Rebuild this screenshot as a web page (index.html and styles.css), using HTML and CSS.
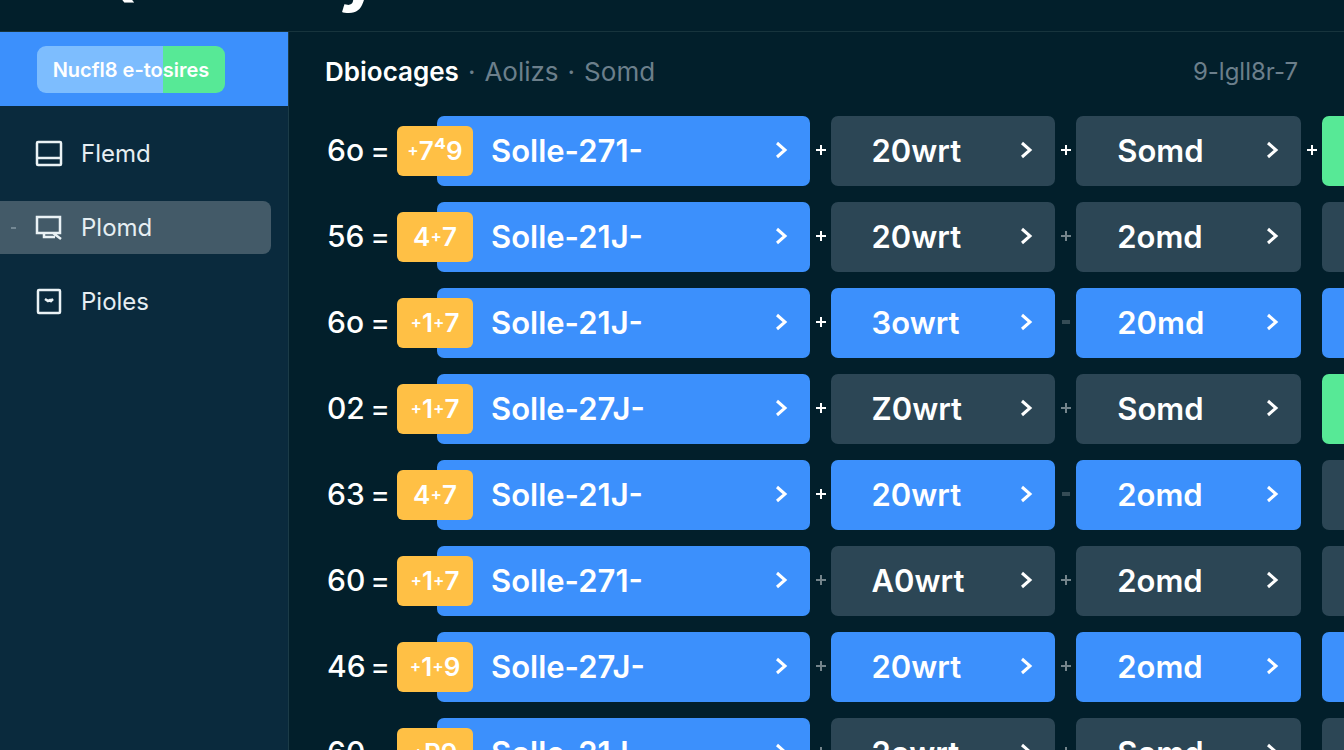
FILE: index.html
```html
<!DOCTYPE html>
<html lang="en">
<head>
    <meta charset="UTF-8">
    <meta name="viewport" content="width=device-width, initial-scale=1.0">
    <title>Dbiocages</title>
    <link rel="stylesheet" href="styles.css">
</head>
<body>
    <header class="top-bar">
        <h1 class="top-title">Quantity</h1>
    </header>
    <div class="layout">
        <aside class="sidebar">
            <div class="side-head">
                <button class="pill-btn">Nucfl8 e-tosires</button>
            </div>
            <nav class="side-nav">
                <a class="nav-item" href="#flemd">
                    <svg class="nav-icon" viewBox="0 0 28 28"><rect x="2" y="2" width="24" height="23" rx="1"/><path d="M2 18h24"/></svg>
                    Flemd
                </a>
                <a class="nav-item active" href="#plomd">
                    <svg class="nav-icon" viewBox="0 0 28 28"><path d="M9 19H2V3h23v16H9v4h11M18 19l8 6"/></svg>
                    Plomd
                </a>
                <a class="nav-item" href="#pioles">
                    <svg class="nav-icon" viewBox="0 0 28 28"><rect x="3" y="2" width="22" height="23" rx="1"/><path d="M10 11l3 2 2-1 1 1 2-2"/></svg>
                    Pioles
                </a>
            </nav>
        </aside>
        <main class="content">
            <div class="crumbs">
                <h2>Dbiocages</h2>
                <span>·</span>
                <a href="#aolizs">Aolizs</a>
                <span>·</span>
                <a href="#somd">Somd</a>
                <span class="crumbs-id">9-lgll8r-7</span>
            </div>
            <div class="rows" id="rows"></div>
        </main>
    </div>
    <script src="rows.js"></script>
</body>
</html>
```
FILE: styles.css
```css
:root {
    --bg: #021f2b;
    --side: #0a2a3d;
    --blue: #3c90fc;
    --slate: #2c4655;
    --green: #57e996;
    --amber: #ffc045;
}

* { box-sizing: border-box; }
body { margin: 0; height: 100vh; display: flex; flex-direction: column; overflow: hidden; background: var(--bg); color: #fff; font-family: Inter, sans-serif; }
button { font-family: inherit; color: inherit; border: none; cursor: pointer; }
a { color: inherit; text-decoration: none; }

.top-bar { height: 32px; flex: none; display: flex; align-items: flex-end; overflow: hidden; padding: 0 84px; border-bottom: 1px solid #17343d; }
.top-title { margin: 0; font-size: 70px; line-height: 80px; font-weight: 700; padding-bottom: 18px; }

.layout { flex: 1; min-height: 0; display: flex; }
.sidebar { width: 289px; flex: none; background: var(--side); border-right: 1px solid #1b3b47; }
.side-head { background: var(--blue); height: 74px; padding: 14px 37px; }
.pill-btn { height: 47px; width: 188px; padding: 0; border-radius: 9px; background: linear-gradient(90deg, #7dbdfe 67%, var(--green) 67%); font-size: 20px; font-weight: 600; }
.side-nav { display: flex; flex-direction: column; gap: 21px; padding: 21px 17px 0 0; }
.nav-item { display: flex; align-items: center; gap: 18px; height: 53px; padding-left: 35px; font-size: 24px; color: #e6eef2; position: relative; border-radius: 0 8px 8px 0; }
.nav-item.active { background: #435a68; }
.nav-item.active::before { content: ""; position: absolute; left: 11px; width: 5px; height: 2px; background: #748894; }
.nav-icon { width: 28px; height: 28px; fill: none; stroke: #eaf2f5; stroke-width: 2.5; }

.content { flex: 1; min-width: 0; padding-left: 36px; overflow: hidden; }
.crumbs { display: flex; align-items: center; gap: 9px; height: 84px; padding: 0 46px 5px 0; font-size: 26px; color: #6c7f8b; }
.crumbs h2 { margin: 0; font-size: 26px; font-weight: 600; color: #fff; }
.crumbs-id { margin-left: auto; font-size: 24px; }

.rows { display: flex; flex-direction: column; gap: 16px; }
.row { display: grid; grid-template-columns: 91px minmax(0, 373fr) minmax(0, 225fr) minmax(0, 225fr) 22px; gap: 21px; height: 70px; }
.row-label { display: flex; align-items: center; padding: 0 26px 2px 2px; justify-content: space-between; font-size: 30px; font-weight: 500; white-space: nowrap; }
.row-label .eq { font-weight: 400; }
.cell { position: relative; display: flex; align-items: center; justify-content: space-between; padding: 0 22px 2px 41px; border-radius: 7px; background: var(--slate); font-size: 31px; font-weight: 600; text-align: left; }
.cell.blue { background: var(--blue); }
.cell.green { background: var(--green); }
.cell.main { padding-left: 54px; }
.cell.peek { width: 225px; }
.chevron { width: 14px; height: 20px; fill: none; stroke: #fff; stroke-width: 3; }
.badge { position: absolute; left: -40px; top: 10px; width: 76px; height: 50px; border-radius: 6px; background: var(--amber); font-size: 26px; line-height: 50px; text-align: center; }
.badge small { font-size: 17px; vertical-align: 4px; line-height: 1; }
.plus { position: absolute; left: -16px; width: 12px; height: 12px; fill: none; stroke: #fff; stroke-width: 2; }
.plus.dim { opacity: .45; }
.plus.faint { opacity: .2; }
```
FILE: rows.js
```js
// label, badge, name, second cell + colour, third cell + colour, last cell colour, plus strengths
const rows = [
    ['6o', '+7⁴9', 'Solle-271-', '20wrt', '', 'Somd', '', 'green', ['', '', '']],
    ['56', '4+7', 'Solle-21J-', '20wrt', '', '2omd', '', '', ['', 'dim', 'none']],
    ['6o', '+1+7', 'Solle-21J-', '3owrt', 'blue', '20md', 'blue', 'blue', ['', 'faint', 'none']],
    ['02', '+1+7', 'Solle-27J-', 'Z0wrt', '', 'Somd', '', 'green', ['', 'dim', 'none']],
    ['63', '4+7', 'Solle-21J-', '20wrt', 'blue', '2omd', 'blue', '', ['', 'faint', 'none']],
    ['60', '+1+7', 'Solle-271-', 'A0wrt', '', '2omd', '', '', ['dim', 'dim', 'none']],
    ['46', '+1+9', 'Solle-27J-', '20wrt', 'blue', '2omd', 'blue', 'blue', ['dim', 'dim', 'none']],
    ['60', '+P9', 'Solle-21J-', '2owrt', '', 'Somd', '', '', ['dim', 'dim', 'none']]
];

const chevron = '<svg class="chevron" viewBox="0 0 14 20"><path d="M3 3l8 7-8 7"/></svg>';

function plus(kind) {
    if (kind === 'none') return '';
    const d = kind === 'faint' ? 'M2 5h8M2 7h8' : 'M6 1v10M1 6h10';
    return `<svg class="plus ${kind}" viewBox="0 0 12 12"><path d="${d}"/></svg>`;
}

document.getElementById('rows').innerHTML = rows.map(([label, badge, name, b, bColor, c, cColor, last, p]) => `
    <div class="row">
        <div class="row-label"><span>${label}</span><span class="eq">=</span></div>
        <button class="cell main blue"><span class="badge">${badge.replaceAll('+', '<small>+</small>')}</span>${name}${chevron}</button>
        <button class="cell ${bColor}">${plus(p[0])}${b}${chevron}</button>
        <button class="cell ${cColor}">${plus(p[1])}${c}${chevron}</button>
        <button class="cell peek ${last}" aria-label="More">${plus(p[2])}</button>
    </div>
`).join('');
```
